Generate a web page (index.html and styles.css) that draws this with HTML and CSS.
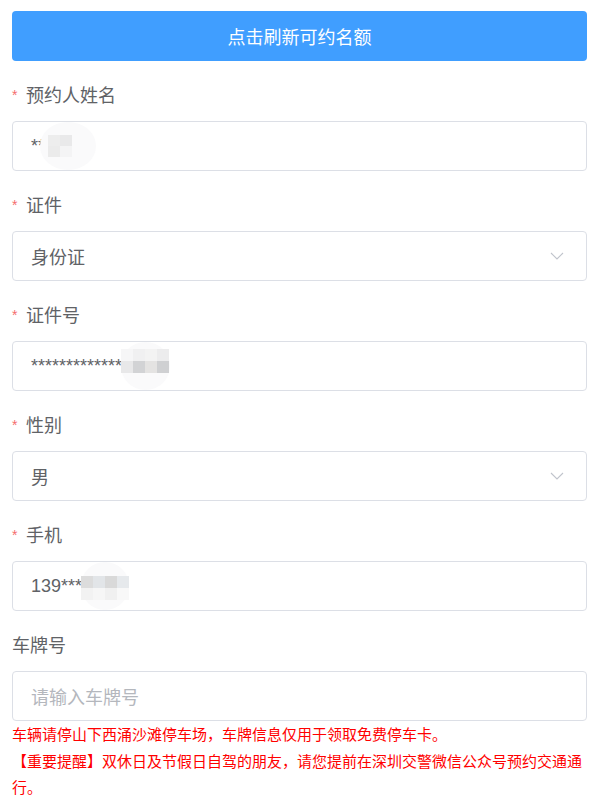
FILE: index.html
```html
<!DOCTYPE html>
<html lang="zh-CN">
<head>
<meta charset="utf-8">
<link rel="stylesheet" href="styles.css">
</head>
<body>
<div class="page">
  <button class="refresh">点击刷新可约名额</button>

  <div class="item">
    <div class="label"><span class="req">*</span>预约人姓名</div>
    <div class="field"><span>**</span><span class="blob b-name"><span class="cells cols2"><i class="g1"></i><i class="g2"></i><i class="g3"></i><i class="g4"></i></span></span></div>
  </div>

  <div class="item">
    <div class="label"><span class="req">*</span>证件</div>
    <div class="field select"><span>身份证</span><svg class="chev" width="14" height="8" viewBox="0 0 14 8"><polyline points="1,1 7,7 13,1" fill="none" stroke="#c0c4cc" stroke-width="1.1"/></svg></div>
  </div>

  <div class="item">
    <div class="label"><span class="req">*</span>证件号</div>
    <div class="field"><span>*************</span><span class="blob b-id"><span class="cells cols4"><i class="i1"></i><i class="i2"></i><i class="i3"></i><i class="i4"></i><i class="i5"></i><i class="i6"></i><i class="i7"></i><i class="i8"></i></span></span></div>
  </div>

  <div class="item">
    <div class="label"><span class="req">*</span>性别</div>
    <div class="field select"><span>男</span><svg class="chev" width="14" height="8" viewBox="0 0 14 8"><polyline points="1,1 7,7 13,1" fill="none" stroke="#c0c4cc" stroke-width="1.1"/></svg></div>
  </div>

  <div class="item">
    <div class="label"><span class="req">*</span>手机</div>
    <div class="field"><span>139***</span><span class="blob b-phone"><span class="cells cols4"><i class="p1"></i><i class="p2"></i><i class="p3"></i><i class="p4"></i><i class="p5"></i><i class="p6"></i><i class="p7"></i><i class="p8"></i></span></span></div>
  </div>

  <div class="item">
    <div class="label">车牌号</div>
    <div class="field"><span class="placeholder">请输入车牌号</span></div>
  </div>

  <p class="note">车辆请停山下西涌沙滩停车场，车牌信息仅用于领取免费停车卡。</p>
  <p class="note">【重要提醒】双休日及节假日自驾的朋友，请您提前在深圳交警微信公众号预约交通通行。</p>
</div>
</body>
</html>
```

FILE: styles.css
```css
html, body {
  margin: 0;
  padding: 0;
  background: #fff;
}
body {
  font-family: "Liberation Sans", "Noto Sans CJK SC", sans-serif;
  color: #606266;
}
.page {
  width: 575px;
  padding: 11px 14px 20px 12px;
}
.refresh {
  display: block;
  width: 575px;
  height: 50px;
  border: none;
  border-radius: 4px;
  background: #409eff;
  color: #fff;
  font-family: "Liberation Sans", "Noto Sans CJK SC", sans-serif;
  font-size: 18px;
  padding: 0;
  margin: 0;
}
.item {
  margin-top: 10px;
}
.label {
  height: 50px;
  line-height: 50px;
  font-size: 18px;
  color: #606266;
  display: flex;
  align-items: center;
}
.req {
  color: #f56c6c;
  font-size: 14px;
  width: 14px;
  line-height: 1;
  margin-top: -2px;
}
.field {
  box-sizing: border-box;
  height: 50px;
  border: 1px solid #dcdfe6;
  border-radius: 4px;
  display: flex;
  align-items: center;
  padding: 0 22px 0 18px;
  font-size: 18px;
  color: #606266;
}
.select {
  justify-content: space-between;
}
.chev {
  display: block;
}
.placeholder {
  color: #b4b7bd;
}

/* privacy mosaic blobs */
.blob {
  display: flex;
  align-items: center;
  height: 48px;
  border-radius: 50%;
  background: #fafafb;
}
.cells {
  display: grid;
  grid-auto-rows: 12px;
}
.cells i {
  display: block;
}
.cols2 { grid-template-columns: repeat(2, 12px); grid-auto-rows: 11px; }
.cols4 { grid-template-columns: repeat(4, 12px); }

.b-name {
  width: 56px;
  margin-left: -5px;
  padding-left: 8px;
  box-sizing: border-box;
}
.g1 { background: #ededed; }
.g2 { background: #e9e9ea; }
.g3 { background: #ebebeb; }
.g4 { background: #f4f4f5; }

.b-id {
  width: 49px;
  margin-left: -1px;
}
.b-id .cells { margin-top: -10px; }
.i1 { background: #f6f6f7; }
.i2 { background: #f0f0f1; }
.i3 { background: #f3f3f3; }
.i4 { background: #ececed; }
.i5 { background: #e8e8e9; }
.i6 { background: #d2d3d5; }
.i7 { background: #e4e3e2; }
.i8 { background: #cfd0d2; }

.b-phone {
  width: 48px;
  margin-left: -1px;
}
.b-phone .cells { margin-top: 4px; }
.p1 { background: #dcdcdc; }
.p2 { background: #e2e5e8; }
.p3 { background: #d9d9d9; }
.p4 { background: #e6e9ec; }
.p5 { background: #f2f2f2; }
.p6 { background: #f6f6f6; }
.p7 { background: #f0f0f0; }
.p8 { background: #f8f8f8; }

.note {
  margin: 0;
  color: #ff0000;
  font-size: 15px;
  line-height: 26px;
  font-family: "Noto Sans CJK SC", sans-serif;
}
.note + .note {
  margin-top: 1px;
}
```
